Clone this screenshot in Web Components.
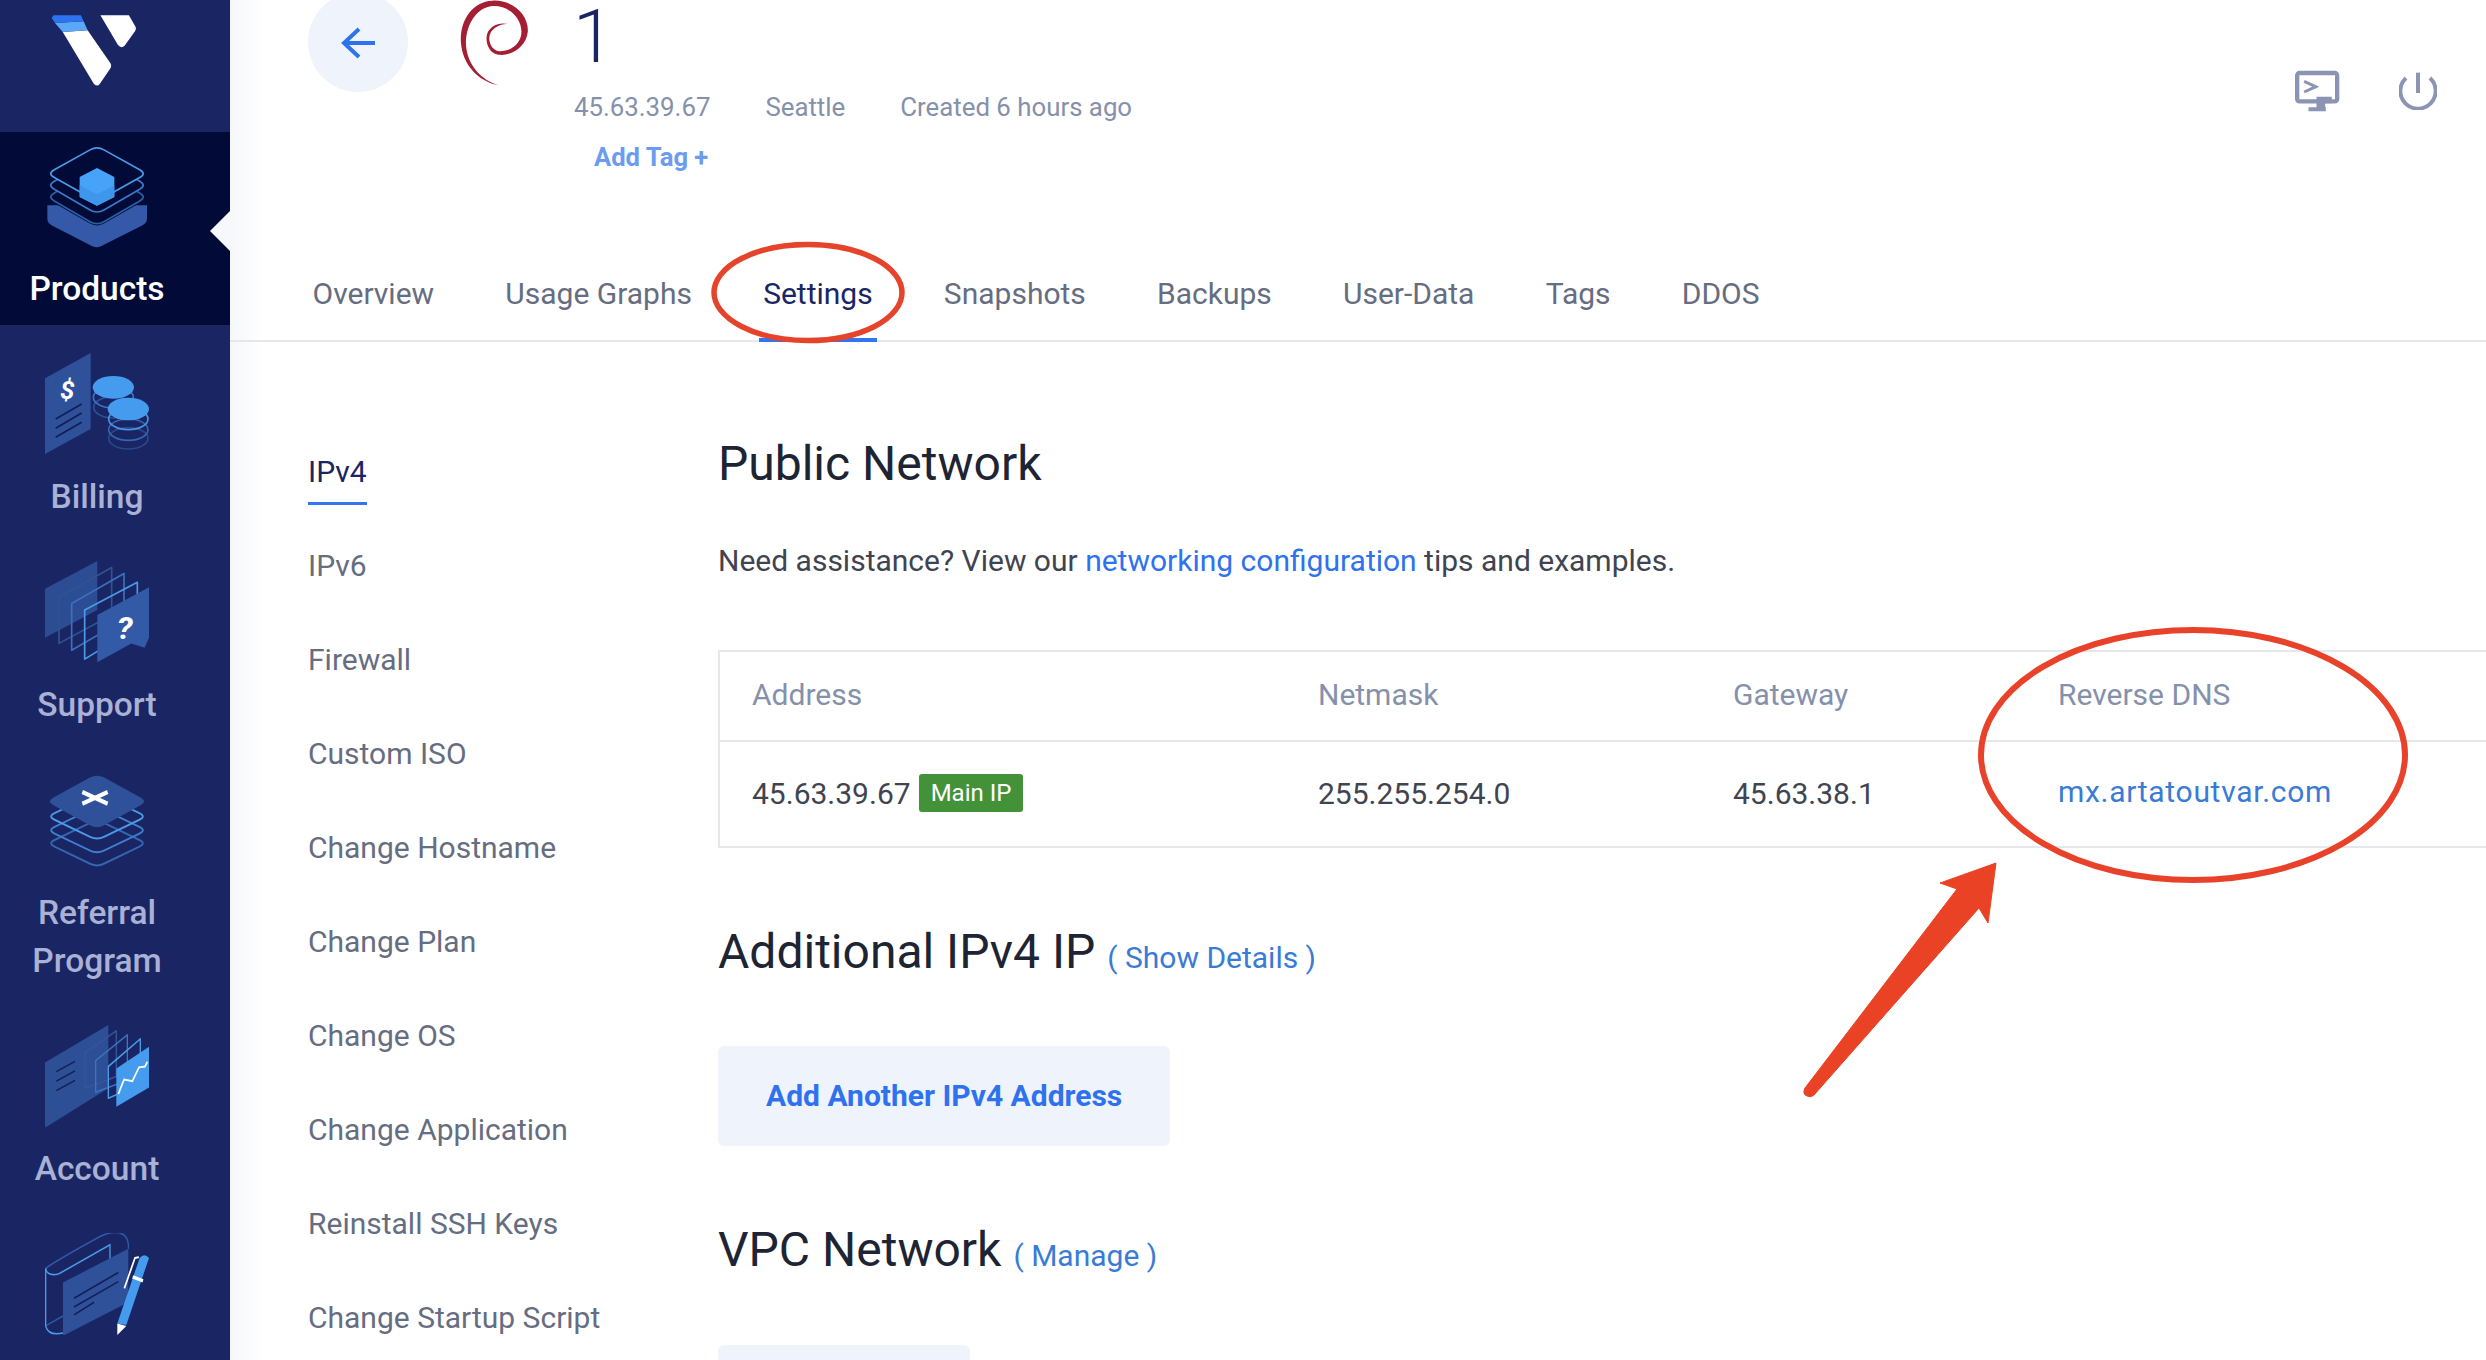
<!DOCTYPE html>
<html>
<head>
<meta charset="utf-8">
<title>Server settings</title>
<style>
html, body { margin: 0; height: 100%; background: #fff; overflow: hidden; }
body { font-family: Roboto, "Liberation Sans", sans-serif; }
</style>
</head>
<body>
<vx-app>
  <vx-sidebar slot="side"></vx-sidebar>
  <vx-header slot="head"></vx-header>
  <vx-tabs slot="head"></vx-tabs>
  <vx-subnav slot="sub"></vx-subnav>
  <vx-network slot="body"></vx-network>
</vx-app>
<script>
// helper for the rounded diamonds used by the stacked icons
function diamond (cx, cy, w, h) {
    const t = 0.14
    const dx = w * t, dy = h * t
    return `M${cx - dx} ${cy - h + dy} Q${cx} ${cy - h} ${cx + dx} ${cy - h + dy}
        L${cx + w - dx} ${cy - dy} Q${cx + w} ${cy} ${cx + w - dx} ${cy + dy}
        L${cx + dx} ${cy + h - dy} Q${cx} ${cy + h} ${cx - dx} ${cy + h - dy}
        L${cx - w + dx} ${cy + dy} Q${cx - w} ${cy} ${cx - w + dx} ${cy - dy} Z`
}

const BLUE = '#459cee', MID = '#3b74c2', DIM = '#2c5198', SHEET = '#2f5199', INK = '#121d55'

const ICONS = {
    products: `<svg viewBox="138 437 312 306" preserveAspectRatio="none">
        <path fill="#3359a8" d="M145 615 V655 Q145 668 160 676 L280 738 Q293 744 306 738 L428 676 Q444 668 444 655 V615 Z"/>
        <path fill="#020b38" d="${diamond(294, 590, 160, 92)}"/>
        <path fill="none" stroke="#2d5ea5" stroke-width="5" d="${diamond(294, 590, 149, 86)}"/>
        <path fill="#020b38" d="${diamond(294, 555, 149, 86)}"/>
        <path fill="none" stroke="#3a7ac6" stroke-width="5" d="${diamond(294, 555, 149, 86)}"/>
        <path fill="#020b38" d="${diamond(294, 520, 149, 83)}"/>
        <path fill="none" stroke="#4a9be8" stroke-width="5" d="${diamond(294, 520, 149, 83)}"/>
        <path fill="#47a3f7" d="M294 503 L346 530 V590 L294 616 L242 590 V530 Z"/>
        <path fill="#3f97ec" d="M242 555 L294 582 L346 555 V590 L294 616 L242 590 Z"/>
    </svg>`,
    billing: `<svg viewBox="138 42 312 306" preserveAspectRatio="none">
        <path fill="${SHEET}" d="M138 118 L275 42 V270 L138 345 Z"/>
        <text x="205" y="180" font-size="78" font-weight="700" font-style="italic" fill="#fff" text-anchor="middle" font-family="Roboto, sans-serif">$</text>
        <g stroke="${INK}" stroke-width="5"><path d="M170 240 L248 195 M170 268 L248 222 M170 295 L248 250"/></g>
        <g fill="none" stroke-width="5">
            <ellipse cx="343" cy="205" rx="59" ry="32" stroke="${DIM}"/>
            <ellipse cx="343" cy="175" rx="60" ry="32" stroke="${MID}"/>
            <ellipse cx="388" cy="298" rx="59" ry="32" stroke="#29488c"/>
            <ellipse cx="388" cy="272" rx="59" ry="32" stroke="#3467b0"/>
            <ellipse cx="388" cy="240" rx="59" ry="32" stroke="#4a95e2"/>
        </g>
        <ellipse cx="343" cy="145" rx="62" ry="34" fill="${BLUE}"/>
        <ellipse cx="388" cy="210" rx="62" ry="34" fill="${BLUE}"/>
    </svg>`,
    support: `<svg viewBox="138 660 312 312" preserveAspectRatio="none">
        <path fill="#2c4d94" d="M138 745 L295 660 V810 L138 895 Z"/>
        <g fill="none" stroke-width="5" stroke-linejoin="round">
            <path stroke="#31538f" d="M180 770 L338 680 V825 L180 912 Z"/>
            <path stroke="#3b70bb" d="M218 790 L375 698 V840 L218 933 Z"/>
            <path stroke="#4a9be8" d="M257 810 L415 725 V862 L257 960 Z"/>
        </g>
        <path fill="#325aa7" d="M295 825 L450 740 V895 L437 925 L397 912 L295 970 Z"/>
        <text x="377" y="898" font-size="98" font-weight="700" font-style="italic" fill="#fff" text-anchor="middle" font-family="Roboto, sans-serif">?</text>
    </svg>`,
    referral: `<svg viewBox="138 70 312 258" preserveAspectRatio="none">
        <g fill="none" stroke-width="5">
            <path stroke="#3467b0" d="${diamond(294, 258, 148, 60)}"/>
            <path stroke="#3f80cf" d="${diamond(294, 225, 148, 60)}"/>
            <path stroke="#4a9be8" d="${diamond(294, 190, 148, 60)}"/>
        </g>
        <path fill="${SHEET}" d="${diamond(294, 152, 152, 70)}"/>
        <path stroke="#fff" stroke-width="11" d="M250 128 L326 158 M326 128 L250 158"/>
    </svg>`,
    account: `<svg viewBox="138 720 312 258" preserveAspectRatio="none">
        <path fill="#2d4f96" d="M138 815 L328 720 V880 L138 980 Z"/>
        <path stroke="${INK}" stroke-width="4" d="M172 838 L228 812 M172 862 L228 836 M172 886 L228 860"/>
        <g fill="none" stroke-width="4" stroke-linejoin="round">
            <path stroke="#34579c" d="M258 790 L352 735 V850 L258 880 Z"/>
            <path stroke="#3c74c0" d="M290 810 L385 745 V860 L290 890 Z"/>
            <path stroke="#4a9be8" d="M328 825 L424 755 V870 L328 905 Z"/>
        </g>
        <path fill="${BLUE}" d="M352 830 L450 775 V878 L352 927 Z"/>
        <path fill="none" stroke="#fff" stroke-width="5" d="M358 895 L375 858 L400 862 L420 827 L438 825 L445 813"/>
    </svg>`,
    book: `<svg viewBox="138 1245 312 258" preserveAspectRatio="none">
        <g fill="none" stroke-width="4">
            <path stroke="#2f5aa6" d="M140 1335 Q150 1325 300 1255 Q350 1235 375 1250 Q390 1260 388 1285"/>
            <path stroke="#2f5aa6" d="M140 1480 L192 1455"/>
            <path stroke="#4a9be8" d="M140 1335 Q145 1356 180 1348 L333 1275 V1315"/>
            <path stroke="#4a9be8" d="M140 1335 V1480 Q148 1506 192 1498"/>
        </g>
        <path fill="${SHEET}" d="M192 1370 L388 1285 V1420 L192 1505 Z"/>
        <path stroke="${INK}" stroke-width="4" d="M225 1410 L358 1345 M225 1432 L358 1368 M225 1452 L285 1420"/>
        <path fill="none" stroke="#fff" stroke-width="5" d="M376 1385 L408 1308 L420 1306"/>
        <path fill="${BLUE}" d="M422 1308 Q436 1294 450 1308 L382 1478 L355 1474 Z"/>
        <path fill="#fff" d="M355 1474 L382 1480 L355 1503 Z"/>
        <path stroke="#fff" stroke-width="9" d="M401 1356 L432 1366"/>
    </svg>`
}

class VxApp extends HTMLElement {
    constructor () {
        super()
        this.attachShadow({ mode: 'open' })
        this.shadowRoot.innerHTML = `
        <style>
            :host { display: flex; width: 100%; height: 100vh; overflow: hidden; position: relative; }
            .side { flex: 0 0 230px; }
            .main { flex: 1; min-width: 0; display: flex; flex-direction: column; background: linear-gradient(to right, #f6f7fa, #fff 32px); }
            .split { display: flex; flex: none; padding-left: 78px; }
            .sub { flex: 0 0 410px; }
            .body { flex: 1; min-width: 0; }
            svg.mark { position: absolute; left: 0; top: 0; pointer-events: none; }
        </style>
        <div class="side"><slot name="side"></slot></div>
        <div class="main">
            <slot name="head"></slot>
            <div class="split">
                <div class="sub"><slot name="sub"></slot></div>
                <div class="body"><slot name="body"></slot></div>
            </div>
        </div>
        <!-- red annotation drawn over the page -->
        <svg class="mark" width="2486" height="1360" viewBox="0 0 2486 1360">
            <ellipse cx="808" cy="292.5" rx="94" ry="48" fill="none" stroke="#e5432a" stroke-width="5.5"/>
            <ellipse cx="2193" cy="755" rx="212" ry="125" fill="none" stroke="#e8432a" stroke-width="6"/>
            <path fill="#ea4225" stroke="#ea4225" stroke-linejoin="round" stroke-width="1" d="M1996 863 L1940 883 L1957 889 L1805 1088 Q1802 1094 1807 1096 Q1811 1098 1814 1095 L1979 908 L1988 923 Z"/>
        </svg>`
    }
}

class VxSidebar extends HTMLElement {
    constructor () {
        super()
        this.attachShadow({ mode: 'open' })
        const items = [
            ['products', ['Products'], true],
            ['billing', ['Billing']],
            ['support', ['Support']],
            ['referral', ['Referral', 'Program']],
            ['account', ['Account']],
            ['book', []]
        ]
        this.shadowRoot.innerHTML = `
        <style>
            :host { display: block; width: 230px; height: 100%; background: #1a2564; overflow: hidden; }
            .logo { height: 132px; display: flex; justify-content: center; box-sizing: border-box; padding: 14px 42px 0 0; }
            .logo svg { width: 88px; height: 75px; }
            a { display: block; padding: 40px 36px 0 0; text-align: center; position: relative; }
            a.active { background: #020b38; padding: 14px 36px 12px 0; color: #fff; }
            a.next { padding-top: 28px; }
            .icon { width: 104px; height: 102px; margin: 0 auto; }
            .icon svg { display: block; width: 100%; height: 100%; }
            span { display: block; font-size: 33.5px; line-height: 48px; font-weight: 500; color: #a9b1d4; }
            span:first-of-type { margin-top: 18px; }
            a.active span { color: #fff; margin-top: 17px; }
            a.active::after { content: ''; position: absolute; right: 0; top: 79px; border: 20px solid transparent; border-left: 0; border-right-color: #f7f8fb; }
        </style>
        <div class="logo">
            <svg viewBox="150 44 262 222">
                <path fill="#fff" d="M188 97 L262 92 L330 190 Q335 198 328 208 L298 252 Q290 262 280 250 Z"/>
                <path fill="#5ba8f8" d="M165 70 L250 65 L262 92 L188 97 Z"/>
                <path fill="#2f72ef" d="M155 55 L160 47 H242 L250 65 L165 70 Z"/>
                <path fill="#fff" d="M300 47 H385 L405 82 Q408 90 403 95 L372 138 Q362 148 352 135 Z"/>
            </svg>
        </div>
        ${items.map(([icon, label, active], i) => `
            <a class="${active ? 'active' : ''} ${i === 1 ? 'next' : ''}">
                <div class="icon">${ICONS[icon]}</div>
                ${label.map(l => `<span>${l}</span>`).join('')}
            </a>`).join('')}`
    }
}

class VxHeader extends HTMLElement {
    constructor () {
        super()
        this.attachShadow({ mode: 'open' })
        this.shadowRoot.innerHTML = `
        <style>
            :host { display: flex; flex: none; height: 226px; box-sizing: border-box; padding: 0 49px 0 78px; align-items: flex-start; }
            .back { width: 100px; height: 100px; margin-top: -8px; border-radius: 50%; background: #eff3fc; display: flex; align-items: center; justify-content: center; flex: none; }
            .back svg { transform: translateY(1px); }
            .logo { width: 74px; height: 87px; margin-left: 49px; flex: none; }
            .info { margin-left: 43px; }
            h1 { margin: 0 0 0 -1px; font-size: 74px; line-height: 74px; height: 74px; font-weight: 300; color: #1a2564; }
            .meta { display: flex; gap: 55px; font-size: 25.8px; line-height: 30px; color: #8590ab; margin-top: 18px; }
            .tag { display: block; font-size: 25.6px; line-height: 30px; font-weight: 700; color: #6c9bf2; margin: 20px 0 0 20px; }
            .tools { margin-left: auto; padding-top: 70px; display: flex; gap: 59px; align-items: flex-start; }
        </style>
        <div class="back">
            <svg width="34" height="34" viewBox="0 0 34 34" fill="none" stroke="#2f72ef" stroke-width="4"><path d="M18 3 L3 17 L18 31 M3 17 H34"/></svg>
        </div>
        <svg class="logo" viewBox="530 0 220 260">
            <path fill="#a41e34" d="M655 255 C595 245 545 195 541 125 C538 60 575 5 635 2 C695 -2 745 45 741 95 C737 140 690 170 650 163 C625 158 612 125 620 100 C628 78 655 65 682 72 C660 70 635 82 627 105 C622 128 635 150 655 153 C690 155 722 130 722 95 C722 50 680 15 635 18 C590 22 558 70 556 125 C556 190 600 240 655 255 Z"/>
        </svg>
        <div class="info">
            <h1>1</h1>
            <div class="meta"><span>45.63.39.67</span><span>Seattle</span><span>Created 6 hours ago</span></div>
            <a class="tag">Add Tag +</a>
        </div>
        <div class="tools">
            <svg width="46" height="42" viewBox="165 88 137 126" fill="none">
                <rect x="174" y="97" width="120" height="85" rx="7" stroke="#8b95b3" stroke-width="13"/>
                <path d="M195 122 L230 138 L195 154" stroke="#8b95b3" stroke-width="9"/>
                <path fill="#8b95b3" d="M232 168 H278 V188 H258 V200 H260 V212 H208 V200 H232 Z"/>
            </svg>
            <svg width="38" height="38" viewBox="478 95 112 114" fill="none" stroke="#8b95b3" stroke-width="12" style="margin-top:2px">
                <path d="M498 113 A53 53 0 1 0 570 113"/>
                <path d="M534 97 V158"/>
            </svg>
        </div>`
    }
}

class VxTabs extends HTMLElement {
    constructor () {
        super()
        this.attachShadow({ mode: 'open' })
        const tabs = ['Overview', 'Usage Graphs', 'Settings', 'Snapshots', 'Backups', 'User-Data', 'Tags', 'DDOS']
        this.shadowRoot.innerHTML = `
        <style>
            :host { display: flex; flex: none; gap: 71.2px; height: 116px; box-sizing: border-box; padding: 0 0 0 82.5px; border-bottom: 2px solid #e6e7ea; }
            a { font-size: 30px; line-height: 36px; color: #666d80; position: relative; padding-top: 50px; height: 114px; box-sizing: border-box; }
            a.on { color: #1a2564; }
            a.on::after { content: ''; position: absolute; left: -4px; right: -4px; bottom: -2px; height: 4px; background: #3374f0; }
        </style>
        ${tabs.map(t => `<a class="${t === 'Settings' ? 'on' : ''}">${t}</a>`).join('')}`
    }
}

class VxSubnav extends HTMLElement {
    constructor () {
        super()
        this.attachShadow({ mode: 'open' })
        const items = ['IPv4', 'IPv6', 'Firewall', 'Custom ISO', 'Change Hostname', 'Change Plan', 'Change OS', 'Change Application', 'Reinstall SSH Keys', 'Change Startup Script']
        this.shadowRoot.innerHTML = `
        <style>
            :host { display: flex; flex-direction: column; gap: 58px; padding-top: 112px; }
            a { display: block; font-size: 30px; line-height: 36px; color: #666d80; width: max-content; position: relative; }
            a.on { color: #1a2564; }
            a.on::after { content: ''; position: absolute; left: 0; right: 0; bottom: -15px; height: 3px; background: #3374f0; }
        </style>
        ${items.map((t, i) => `<a class="${i === 0 ? 'on' : ''}">${t}</a>`).join('')}`
    }
}

class VxSection extends HTMLElement {
    constructor () {
        super()
        this.attachShadow({ mode: 'open' })
        this.shadowRoot.innerHTML = `
        <style>
            :host { display: block; }
            h2 { margin: 0; font-size: 48px; line-height: 60px; font-weight: 400; color: #1d2433; display: flex; align-items: baseline; gap: 12px; }
            ::slotted([slot=link]) { font-size: 30px; }
        </style>
        <h2><slot name="title"></slot><slot name="link"></slot></h2>
        <slot></slot>`
    }
}

class VxButton extends HTMLElement {
    constructor () {
        super()
        this.attachShadow({ mode: 'open' })
        this.shadowRoot.innerHTML = `
        <style>
            :host { display: block; width: max-content; }
            button { display: block; border: 0; border-radius: 6px; background: #eff3fc; color: #2f72f0; font: 700 30px/100px Roboto, sans-serif; padding: 0 48px; height: 100px; }
        </style>
        <button><slot></slot></button>`
    }
}

class VxNetwork extends HTMLElement {
    constructor () {
        super()
        this.attachShadow({ mode: 'open' })
        this.shadowRoot.innerHTML = `
        <style>
            :host { display: block; padding-top: 92px; color: #3f4450; }
            p { margin: 49px 0 0; font-size: 30px; line-height: 36px; color: #3f4450; }
            a { color: #2f72f0; }
            a[slot=link] { color: #3a7bd5; }
            .table { margin: 71px -20px 0 0; border: 2px solid #e6e7ea; border-right: 0; display: grid; grid-template-columns: 566px 415px 325px 1fr; padding-left: 32px; }
            .table > div { display: flex; align-items: center; font-size: 30px; box-sizing: border-box; }
            .th { height: 90px; padding-bottom: 3px; color: #8590ab; border-bottom: 2px solid #e6e7ea; margin-left: -32px; padding-left: 32px; }
            .th + .th { margin-left: 0; padding-left: 0; }
            .td { height: 104px; padding-bottom: 2px; color: #3f4450; }
            .badge { display: inline-block; background: #43923a; color: #fff; font-size: 24px; line-height: 38px; height: 38px; padding: 0 12px; border-radius: 3px; margin-left: 8px; }
            .table > .rdns { color: #3a7bd5; letter-spacing: .7px; padding-bottom: 5px; }
            .s2 { margin-top: 74px; }
            .b1 { margin-top: 58px; }
            .s3 { margin-top: 74px; }
            .b2 { margin-top: 59px; }
            .short { width: 252px; height: 100px; background: #eff3fc; border-radius: 6px; }
        </style>
        <vx-section><span slot="title">Public Network</span></vx-section>
        <p>Need assistance? View our <a>networking configuration</a> tips and examples.</p>
        <div class="table">
            <div class="th">Address</div><div class="th">Netmask</div><div class="th">Gateway</div><div class="th">Reverse DNS</div>
            <div class="td">45.63.39.67<span class="badge">Main IP</span></div><div class="td">255.255.254.0</div><div class="td">45.63.38.1</div><div class="td rdns">mx.artatoutvar.com</div>
        </div>
        <vx-section class="s2"><span slot="title">Additional IPv4 IP</span><a slot="link">( Show Details )</a></vx-section>
        <vx-button class="b1">Add Another IPv4 Address</vx-button>
        <vx-section class="s3"><span slot="title">VPC Network</span><a slot="link">( Manage )</a></vx-section>
        <div class="short b2"></div>`
    }
}

customElements.define('vx-section', VxSection)
customElements.define('vx-button', VxButton)
customElements.define('vx-sidebar', VxSidebar)
customElements.define('vx-header', VxHeader)
customElements.define('vx-tabs', VxTabs)
customElements.define('vx-subnav', VxSubnav)
customElements.define('vx-network', VxNetwork)
customElements.define('vx-app', VxApp)
</script>
</body>
</html>
